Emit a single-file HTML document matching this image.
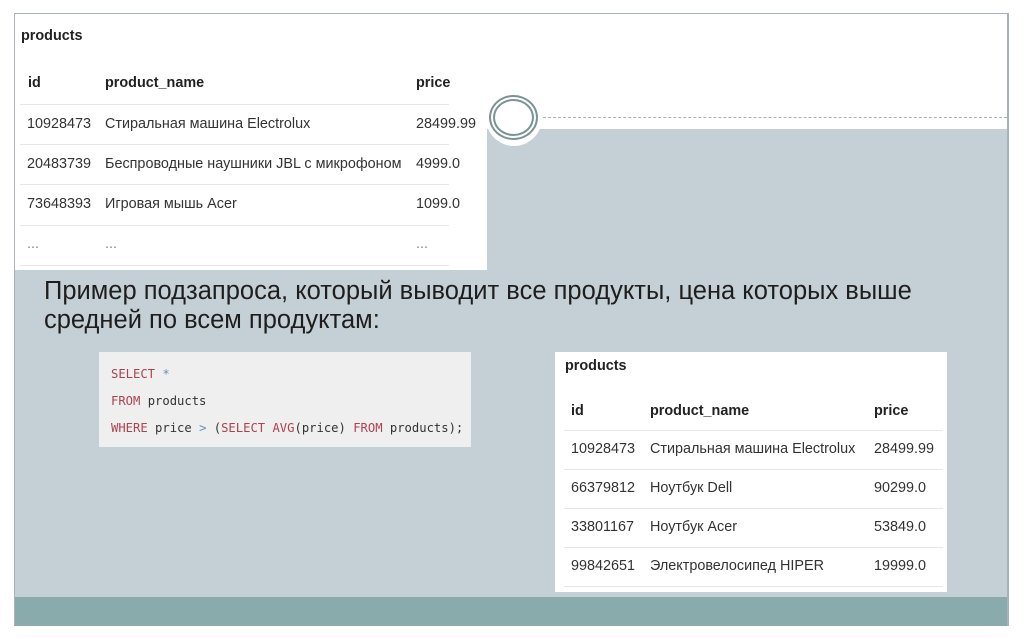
<!DOCTYPE html><html><head><meta charset="utf-8"><style>
*{margin:0;padding:0;box-sizing:border-box}
body{width:1024px;height:639px;background:#fff;position:relative;overflow:hidden;font-family:"Liberation Sans",Arial,sans-serif;color:#333}
.a{position:absolute}
.t{position:absolute;font-size:14.4px;white-space:nowrap;color:#333}
.b{font-weight:bold;color:#222}
.ln{position:absolute;height:1px;background:#e6e6e6}
.mono{font-family:"DejaVu Sans Mono","Liberation Mono",monospace;font-size:12.2px;color:#333;position:absolute;white-space:nowrap}
.k{color:#b0414f}
</style></head><body>
<div class="a" style="left:14px;top:13px;width:994px;height:1px;background:#a9b2b6"></div>
<div class="a" style="left:14px;top:13px;width:1px;height:613px;background:#a9b2b6"></div>
<div class="a" style="left:1007px;top:13px;width:2px;height:613px;background:#a9b2b6"></div>
<div class="a" style="left:15px;top:129px;width:992px;height:468px;background:#c5d0d6"></div>
<div class="a" style="left:15px;top:597px;width:992px;height:29px;background:#8aabab"></div>
<div class="a" style="left:543px;top:117px;width:464px;border-top:1px dashed #a9b2b6"></div>
<div class="a" style="left:15px;top:14px;width:472px;height:256px;background:#fff"></div>
<div class="a" style="left:486px;top:90px;width:56px;height:56px;border-radius:50%;background:#fff"></div>
<div class="a" style="left:489px;top:95px;width:49px;height:45px;border-radius:50%;border:2px solid #7a9494"></div>
<div class="a" style="left:493px;top:99px;width:41px;height:37px;border-radius:50%;border:2px solid #7a9494"></div>
<div class="t b" style="left:21px;top:28px">products</div>
<div class="t b" style="left:28px;top:75px">id</div><div class="t b" style="left:105px;top:75px">product_name</div><div class="t b" style="left:416px;top:75px">price</div>
<div class="ln" style="left:20px;top:104px;width:429px"></div>
<div class="t" style="left:27px;top:116px">10928473</div><div class="t" style="left:105px;top:116px">Стиральная машина Electrolux</div><div class="t" style="left:416px;top:116px">28499.99</div>
<div class="ln" style="left:20px;top:144px;width:429px"></div>
<div class="t" style="left:27px;top:156px">20483739</div><div class="t" style="left:105px;top:156px">Беспроводные наушники JBL с микрофоном</div><div class="t" style="left:416px;top:156px">4999.0</div>
<div class="ln" style="left:20px;top:184px;width:429px"></div>
<div class="t" style="left:27px;top:196px">73648393</div><div class="t" style="left:105px;top:196px">Игровая мышь Acer</div><div class="t" style="left:416px;top:196px">1099.0</div>
<div class="ln" style="left:20px;top:225px;width:429px"></div>
<div class="t" style="left:27px;top:236px;color:#888">...</div><div class="t" style="left:105px;top:236px;color:#888">...</div><div class="t" style="left:416px;top:236px;color:#888">...</div>
<div class="ln" style="left:20px;top:265px;width:429px"></div>
<div class="a" style="left:44px;top:277px;font-size:25.5px;line-height:29px;color:#1e1e1e;width:950px;white-space:nowrap">Пример подзапроса, который выводит все продукты, цена которых выше<br>средней по всем продуктам:</div>
<div class="a" style="left:99px;top:352px;width:372px;height:95px;background:#efefef"></div>
<div class="mono" style="left:111px;top:367px"><span class="k">SELECT</span> <span style="color:#6a8fb0">*</span></div>
<div class="mono" style="left:111px;top:394px"><span class="k">FROM</span> products</div>
<div class="mono" style="left:111px;top:421px"><span class="k">WHERE</span> price <span style="color:#6a8fb0">&gt;</span> (<span class="k">SELECT</span> <span class="k">AVG</span>(price) <span class="k">FROM</span> products);</div>
<div class="a" style="left:555px;top:352px;width:392px;height:240px;background:#fff"></div>
<div class="t b" style="left:565px;top:358px">products</div>
<div class="t b" style="left:571px;top:403px">id</div><div class="t b" style="left:650px;top:403px">product_name</div><div class="t b" style="left:874px;top:403px">price</div>
<div class="ln" style="left:564px;top:430px;width:379px"></div>
<div class="t" style="left:571px;top:441px">10928473</div><div class="t" style="left:650px;top:441px">Стиральная машина Electrolux</div><div class="t" style="left:874px;top:441px">28499.99</div>
<div class="ln" style="left:564px;top:469px;width:379px"></div>
<div class="t" style="left:571px;top:480px">66379812</div><div class="t" style="left:650px;top:480px">Ноутбук Dell</div><div class="t" style="left:874px;top:480px">90299.0</div>
<div class="ln" style="left:564px;top:508px;width:379px"></div>
<div class="t" style="left:571px;top:519px">33801167</div><div class="t" style="left:650px;top:519px">Ноутбук Acer</div><div class="t" style="left:874px;top:519px">53849.0</div>
<div class="ln" style="left:564px;top:547px;width:379px"></div>
<div class="t" style="left:571px;top:558px">99842651</div><div class="t" style="left:650px;top:558px">Электровелосипед HIPER</div><div class="t" style="left:874px;top:558px">19999.0</div>
<div class="ln" style="left:564px;top:586px;width:379px"></div>
</body></html>
